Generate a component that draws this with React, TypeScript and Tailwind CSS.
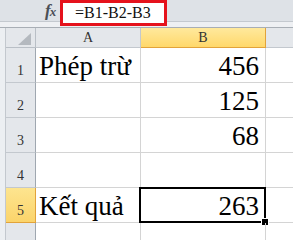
const rows = [
  { n: 1, a: "Phép trừ", b: "456" },
  { n: 2, a: "", b: "125" },
  { n: 3, a: "", b: "68" },
  { n: 4, a: "", b: "" },
  { n: 5, a: "Kết quả", b: "263" },
  { n: 6, a: "", b: "" },
];

const RowHead = ({ n, active }: { n: number; active: boolean }) => (
  <div
    className={
      active
        ? "w-[30px] h-full flex items-end justify-center pb-[4px] text-[14px] leading-none text-[#333] bg-gradient-to-b from-[#fde58f] to-[#fbd46a] border-r border-b border-[#e2a33a]"
        : "w-[30px] h-full flex items-end justify-center pb-[4px] text-[14px] leading-none text-[#333] bg-[#e4e7eb] border-r border-r-[#9fa7b0] border-b border-b-[#c3c8ce]"
    }
  >
    {n}
  </div>
);

export default function App() {
  return (
    <div className="w-[293px] h-[240px] overflow-hidden bg-white font-['Liberation_Serif',serif] text-black">
      {/* formula bar */}
      <div className="relative h-[22px] bg-[#dee2e7] border-b border-[#c4c9cf]">
        <span className="absolute left-[45px] top-[1px] text-[17px] leading-[20px] italic font-bold text-[#4a4f56] tracking-[-1px]">
          f<span className="text-[13px]">x</span>
        </span>
        <div className="absolute left-[60px] top-0 w-[107px] h-[26px] z-10 bg-white border-[3px] border-[#e5121c] flex items-center pl-[12px] text-[16px] leading-none text-[#111]">
          =B1-B2-B3
        </div>
      </div>
      <div className="h-[6px] bg-[#eef0f3] border-b border-[#a8aeb5]" />

      {/* column headers */}
      <div className="flex h-[20px]">
        <div className="w-[6px] bg-[#eceff2] border-r border-[#c3c8ce]" />
        <div className="relative w-[30px] bg-[#e4e7eb] border-r border-b border-[#b9bfc6]">
          <svg className="absolute right-[4px] bottom-[2px]" width="13" height="12" viewBox="0 0 13 12">
            <polygon points="13,0 13,12 0,12" fill="#b4b9bf" />
          </svg>
        </div>
        <div className="w-[105px] flex items-center justify-center text-[14px] leading-none text-[#333] bg-[#e4e7eb] border-r border-b border-[#c3c8ce]">
          A
        </div>
        <div className="w-[125px] flex items-center justify-center text-[14px] leading-none text-[#333] bg-gradient-to-b from-[#ffe99c] to-[#ffd86a] border-r border-b border-[#e2a33a]">
          B
        </div>
        <div className="flex-1 bg-[#e4e7eb] border-b border-[#c3c8ce]" />
      </div>

      {/* rows */}
      {rows.map((r) => (
        <div key={r.n} className="flex h-[35px]">
          <div className="w-[6px] bg-[#eceff2] border-r border-[#c3c8ce]" />
          <RowHead n={r.n} active={r.n === 5} />
          <div className="w-[105px] flex items-end pl-[3px] pb-[2px] text-[27px] leading-none border-r border-b border-[#d4d4d4] whitespace-nowrap">
            {r.a}
          </div>
          <div className="relative w-[125px] flex items-end justify-end pr-[6px] pb-[2px] text-[27px] leading-none border-r border-b border-[#d4d4d4]">
            {r.b}
            {r.n === 5 && (
              <div className="absolute left-[-2px] top-[-1px] right-[-1px] bottom-[-1px] border-2 border-black">
                <div className="absolute right-[-4px] bottom-[-4px] w-[6px] h-[6px] bg-black outline outline-1 outline-white" />
              </div>
            )}
          </div>
          <div className="flex-1 border-b border-[#d4d4d4]" />
        </div>
      ))}
    </div>
  );
}
